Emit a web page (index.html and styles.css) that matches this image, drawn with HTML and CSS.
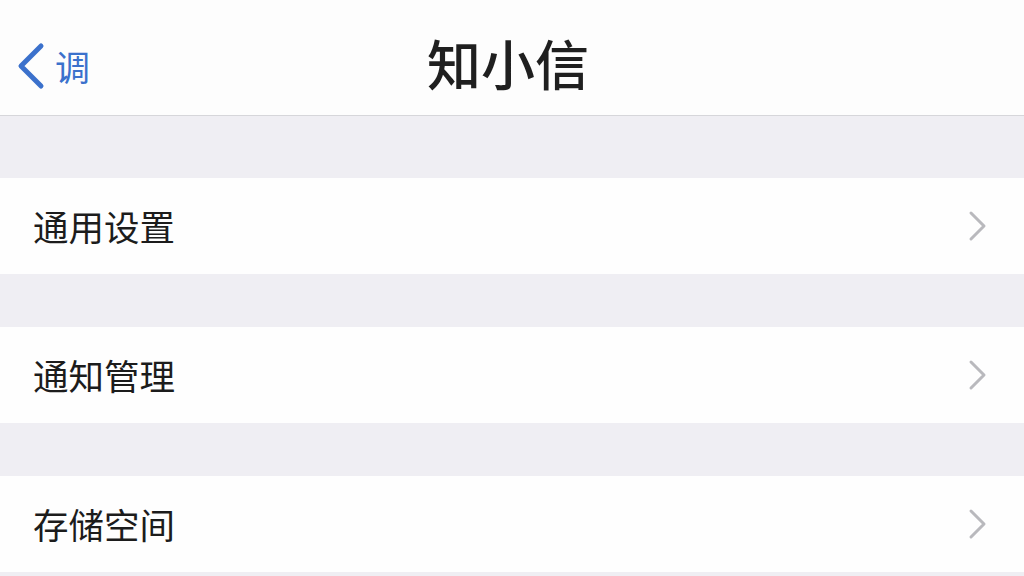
FILE: index.html
```html
<!DOCTYPE html>
<html lang="zh-CN">
<head>
<meta charset="utf-8">
<link rel="stylesheet" href="styles.css">
</head>
<body>
<div class="page">
  <header class="nav">
    <div class="back">
      <svg class="back-icon" width="30" height="48" viewBox="0 0 30 48"><path d="M26 4 L6 24 L26 44" fill="none" stroke="#3b71cc" stroke-width="5" stroke-linecap="round" stroke-linejoin="round"/></svg>
      <span class="back-text">调</span>
    </div>
    <h1 class="title">知小信</h1>
  </header>
  <div class="gap gap-first"></div>
  <div class="row"><span class="label">通用设置</span><svg class="chev" width="20" height="32" viewBox="0 0 20 32"><path d="M3 3 L16 16 L3 29" fill="none" stroke="#b9b9bd" stroke-width="3" stroke-linecap="round" stroke-linejoin="round"/></svg></div>
  <div class="gap"></div>
  <div class="row"><span class="label">通知管理</span><svg class="chev" width="20" height="32" viewBox="0 0 20 32"><path d="M3 3 L16 16 L3 29" fill="none" stroke="#b9b9bd" stroke-width="3" stroke-linecap="round" stroke-linejoin="round"/></svg></div>
  <div class="gap"></div>
  <div class="row"><span class="label">存储空间</span><svg class="chev" width="20" height="32" viewBox="0 0 20 32"><path d="M3 3 L16 16 L3 29" fill="none" stroke="#b9b9bd" stroke-width="3" stroke-linecap="round" stroke-linejoin="round"/></svg></div>
  <div class="gap"></div>
</div>
</body>
</html>
```
FILE: styles.css
```css
html, body {
  margin: 0;
  padding: 0;
  background: #efeef3;
  font-family: "Noto Sans CJK SC", "Noto Sans", sans-serif;
}
.page {
  width: 1024px;
  height: 576px;
  overflow: hidden;
  display: flex;
  flex-direction: column;
}
.nav {
  height: 115px;
  flex: none;
  background: #fdfdfd;
  border-bottom: 1px solid #d6d6da;
  display: flex;
  align-items: center;
  justify-content: center;
  position: relative;
}
.back {
  position: absolute;
  left: 15px;
  top: 42px;
  display: flex;
  align-items: center;
  gap: 10px;
}
.back-icon { display: block; }
.back-text {
  color: #3b71cc;
  font-size: 35px;
  line-height: 48px;
}
.title {
  margin: 0 8px 0 0;
  font-size: 54px;
  font-weight: 500;
  color: #1f1f1f;
  line-height: 1;
  padding-top: 10px;
}
.gap { height: 53px; flex: none; }
.gap-first { height: 62px; }
.row {
  height: 96px;
  flex: none;
  background: #fefefe;
  display: flex;
  align-items: center;
  justify-content: space-between;
  padding: 0 36px 0 33px;
}
.label {
  font-size: 35.5px;
  color: #1c1c1c;
  line-height: 1;
}
.chev { display: block; }
```
